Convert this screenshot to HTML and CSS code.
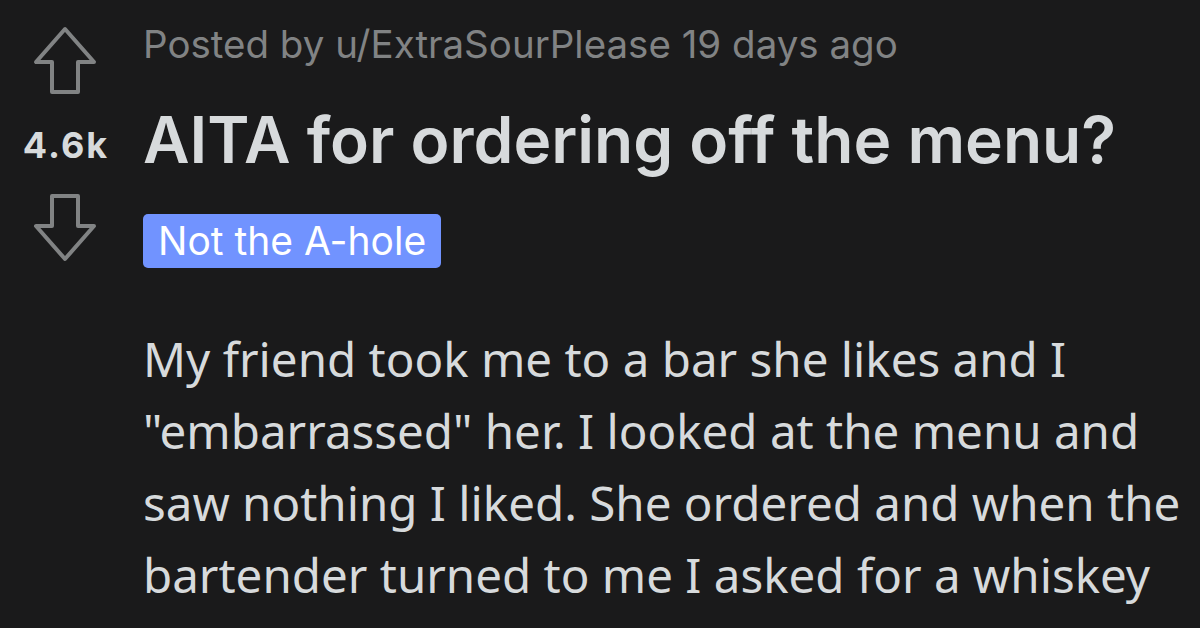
FILE: index.html
```html
<!DOCTYPE html>
<html lang="en">
<head>
<meta charset="utf-8">
<title>AITA for ordering off the menu?</title>
<link rel="stylesheet" href="styles.css">
</head>
<body>
<div class="post">
  <div class="votes">
    <svg class="arrow arrow-up" viewBox="0 0 64 68" width="64" height="68" aria-hidden="true">
      <path d="M32 3 L3 36 L19 36 L19 66 L45 66 L45 36 L61 36 Z" fill="none" stroke="#818384" stroke-width="4" stroke-linejoin="round"/>
    </svg>
    <div class="score">4.6k</div>
    <svg class="arrow" viewBox="0 0 64 68" width="64" height="68" aria-hidden="true">
      <path d="M32 65 L3 32 L19 32 L19 2 L45 2 L45 32 L61 32 Z" fill="none" stroke="#818384" stroke-width="4" stroke-linejoin="round"/>
    </svg>
  </div>
  <div class="content">
    <div class="meta">Posted by u/ExtraSourPlease 19 days ago</div>
    <h1 class="title">AITA for ordering off the menu?</h1>
    <div class="flair-row"><span class="flair">Not the A-hole</span></div>
    <div class="body">
      <p>My friend took me to a bar she likes and I<br>"embarrassed" her. I looked at the menu and<br>saw nothing I liked. She ordered and when the<br>bartender turned to me I asked for a whiskey<br>neat, but she said that it was the kind of drink</p>
    </div>
  </div>
</div>
</body>
</html>
```

FILE: styles.css
```css
html, body {
  margin: 0;
  padding: 0;
  background: #1a1a1b;
  width: 1200px;
  height: 628px;
  overflow: hidden;
}

.post {
  display: flex;
  padding-top: 22px;
}

.votes {
  width: 130px;
  flex: none;
  display: flex;
  flex-direction: column;
  align-items: center;
}

.arrow {
  display: block;
}

.arrow-up {
  margin-top: 4px;
}

.score {
  font-family: Inter, "Noto Sans", sans-serif;
  font-weight: 700;
  font-size: 36px;
  line-height: 40px;
  color: #d7dadc;
  margin: 31px 0 29px;
  letter-spacing: 2px;
  padding-left: 2px;
}

.content {
  flex: 1;
  padding-left: 13px;
}

.meta {
  font-family: Inter, "Noto Sans", sans-serif;
  font-size: 38.5px;
  line-height: 44px;
  color: #818384;
}

.title {
  margin: 36px 0 0;
  font-family: Inter, "Noto Sans", sans-serif;
  font-weight: 600;
  font-size: 64px;
  line-height: 76px;
  color: #d7dadc;
}

.flair-row {
  margin-top: 36px;
  display: flex;
}

.flair {
  background: #7193ff;
  color: #ffffff;
  font-family: Inter, "Noto Sans", sans-serif;
  font-size: 39px;
  line-height: 54px;
  height: 54px;
  padding: 0 15px;
  border-radius: 5px;
}

.body {
  margin-top: 55px;
}

.body p {
  margin: 0;
  font-family: "Noto Sans", sans-serif;
  font-size: 47.5px;
  line-height: 72px;
  color: #d7dadc;
  white-space: nowrap;
}
```
